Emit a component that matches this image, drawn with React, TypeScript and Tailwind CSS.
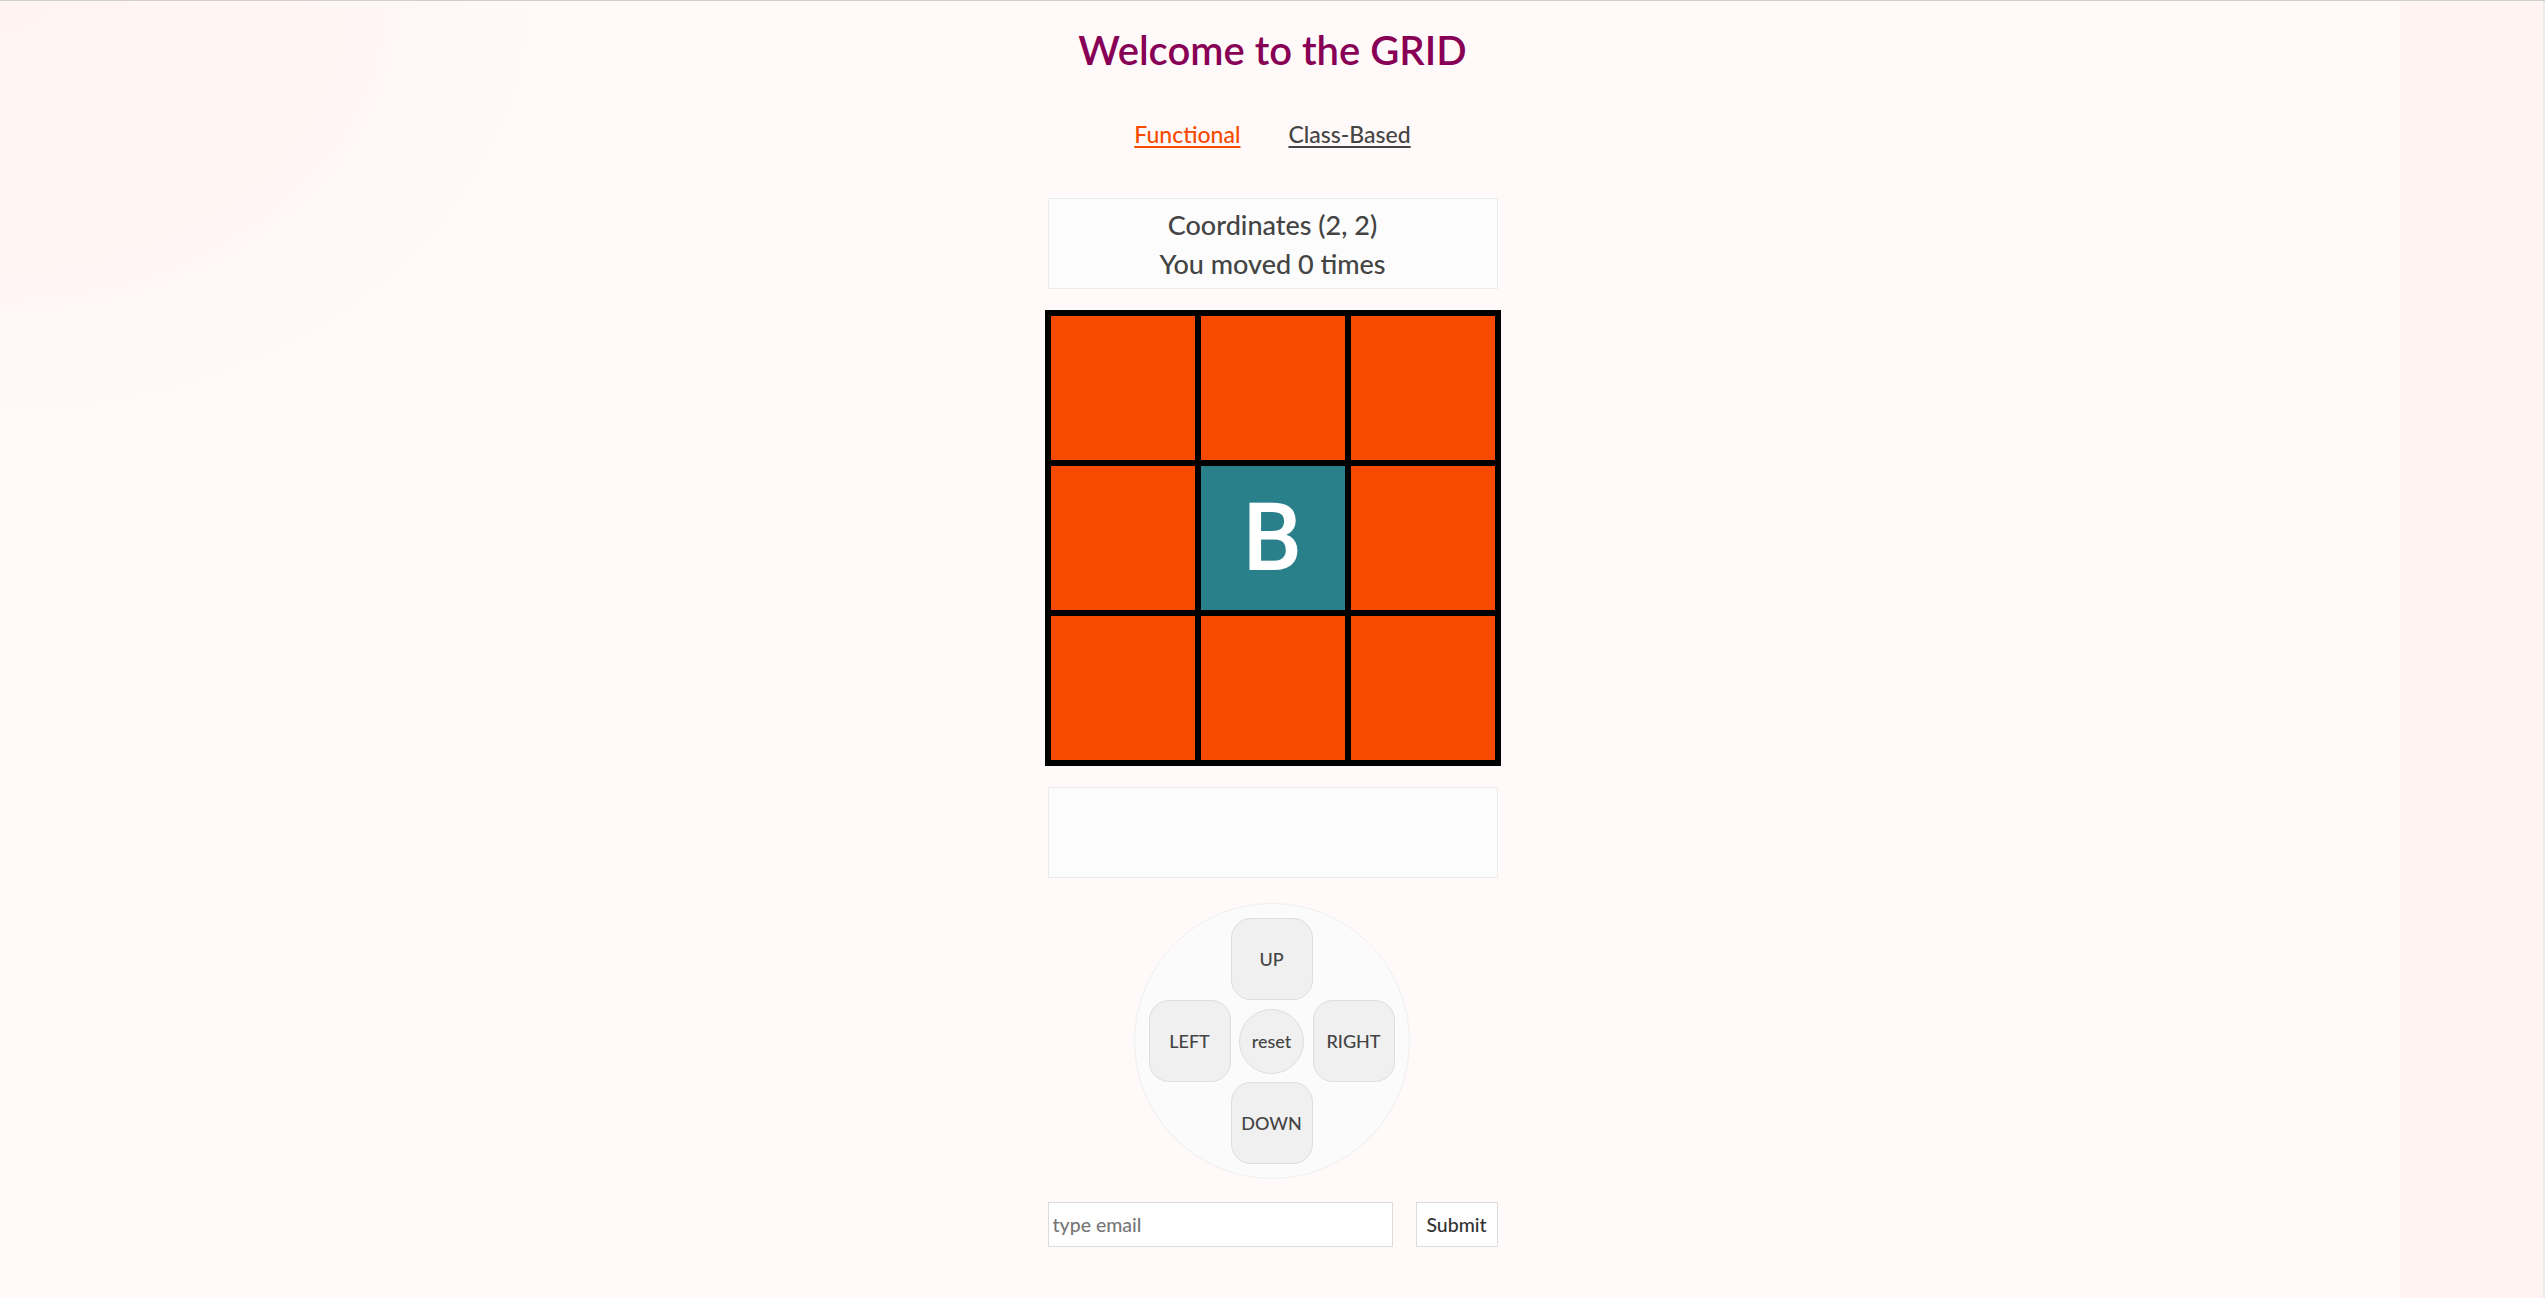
import React from "react";

const cells = [0, 1, 2, 3, 4, 5, 6, 7, 8];

function PadButton({ label, className = "" }: { label: string; className?: string }) {
  return (
    <button
      type="button"
      className={
        "flex h-[82px] w-[82px] items-center justify-center rounded-[20px] border border-[#dedede] bg-[#f0f0f0] text-[18px] font-medium text-[#444] " +
        className
      }
    >
      {label}
    </button>
  );
}

export default function App() {
  return (
    <div className="min-h-screen w-full border-t border-[#cfcfcf] bg-[#fffaf9] bg-[radial-gradient(ellipse_900px_700px_at_0%_0%,#fff4f2_0%,#fff7f5_45%,transparent_75%),linear-gradient(to_right,transparent_2400px,#fff4f1_2400px,#fff4f1_2543px,#ececec_2543px)] font-['Lato',sans-serif] font-medium pb-[51px]">
      <div className="mx-auto flex w-[450px] flex-col items-center">
        <h1 className="mt-[24px] h-[50px] whitespace-nowrap text-[40px] font-semibold leading-[50px] text-[#880055]">
          Welcome to the GRID
        </h1>

        <nav className="mt-[44px] flex h-[30px] gap-12 text-[23px] leading-[30px]">
          <a href="#" className="text-[#f54a00] underline underline-offset-[3px]">
            Functional
          </a>
          <a href="#" className="text-[#444] underline underline-offset-[3px]">
            Class-Based
          </a>
        </nav>

        <div className="mt-[49px] flex h-[91px] w-[450px] flex-col items-center justify-center border border-[#ececec] bg-[#fcfcfc] text-[27px] leading-[39px] text-[#444]">
          <h3>Coordinates (2, 2)</h3>
          <h3>You moved 0 times</h3>
        </div>

        <div className="mt-[21px] grid w-[456px] shrink-0 grid-cols-3 border-[3px] border-black">
          {cells.map((i) => (
            <div
              key={i}
              className={
                "flex h-[150px] items-center justify-center border-[3px] border-black font-['Roboto',sans-serif] text-[94px] font-medium leading-none text-white " +
                (i === 4 ? "bg-[#29808b]" : "bg-[#f54a00]")
              }
            >
              {i === 4 ? "B" : ""}
            </div>
          ))}
        </div>

        <div className="mt-[21px] h-[91px] w-[450px] border border-[#ececec] bg-[#fcfcfc]" />

        <div className="mt-[25px] flex h-[276px] w-[276px] -translate-x-[1px] items-center justify-center rounded-full border border-[#efefef] bg-[#fbfbfb]">
          <div className="grid grid-cols-[82px_82px_82px] grid-rows-[82px_82px_82px]">
            <div />
            <PadButton label="UP" />
            <div />
            <PadButton label="LEFT" />
            <div className="flex items-center justify-center">
              <button
                type="button"
                className="flex h-[65px] w-[65px] items-center justify-center rounded-full border border-[#dedede] bg-[#f0f0f0] text-[18px] font-medium text-[#444]"
              >
                reset
              </button>
            </div>
            <PadButton label="RIGHT" />
            <div />
            <PadButton label="DOWN" />
            <div />
          </div>
        </div>

        <form className="mt-[23px] flex w-[450px] items-center justify-between">
          <input
            type="email"
            placeholder="type email"
            className="h-[45px] w-[345px] border border-[#dcdcdc] bg-white px-[4px] text-[19.5px] font-medium text-[#444] placeholder:text-[#777] outline-none"
          />
          <button
            type="button"
            className="h-[45px] w-[82px] border border-[#dcdcdc] bg-white text-[19.5px] font-medium text-[#333]"
          >
            Submit
          </button>
        </form>
      </div>
    </div>
  );
}
